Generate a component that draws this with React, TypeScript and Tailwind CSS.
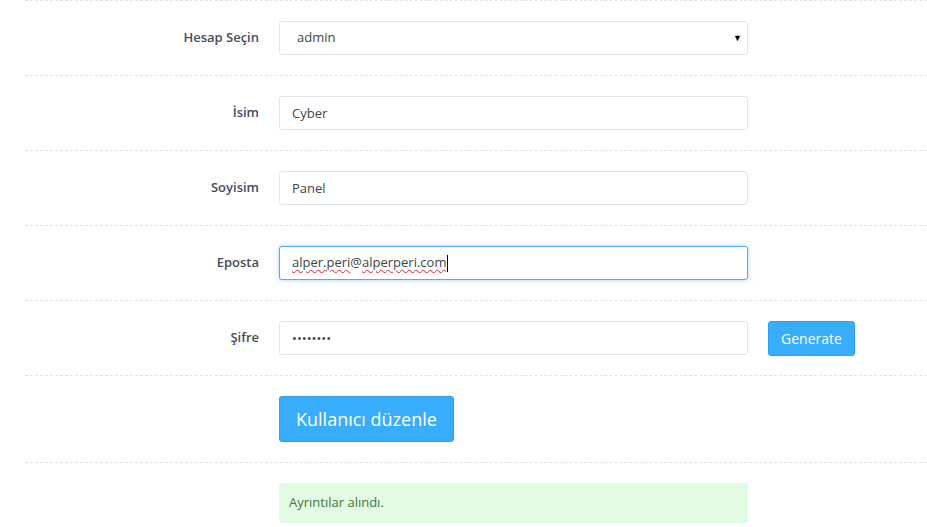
import { ReactNode } from "react";

const font = { fontFamily: '"Open Sans", "Noto Sans", sans-serif' };

function Row({ label, children }: { label?: string; children: ReactNode }) {
  return (
    <div className="flex items-center py-5 border-t border-dashed border-[#dde5ee]">
      <label className="w-[234px] shrink-0 text-right text-[13px] font-semibold text-[#474c59]">
        {label}
      </label>
      <div className="ml-5 flex items-center gap-5">{children}</div>
    </div>
  );
}

const inputCls =
  "w-[469px] h-[34px] rounded-[3px] border border-[#dde5ee] bg-white px-3 text-[13px] text-[#444] outline-none";

export default function App() {
  return (
    <div className="min-h-screen bg-white" style={font}>
      <form className="pl-[25px]" onSubmit={(e) => e.preventDefault()}>
        <Row label="Hesap Seçin">
          <div className="relative">
            <select
              defaultValue="admin"
              className={`${inputCls} appearance-none pl-[17px]`}
            >
              <option value="admin">admin</option>
              <option value="editor">editor</option>
            </select>
            <span className="pointer-events-none absolute right-[6px] top-[10px] text-[9px] text-black">
              ▼
            </span>
          </div>
        </Row>

        <Row label="İsim">
          <input className={inputCls} defaultValue="Cyber" />
        </Row>

        <Row label="Soyisim">
          <input className={inputCls} defaultValue="Panel" />
        </Row>

        <Row label="Eposta">
          {/* focused field with spell-check marks */}
          <div className="flex w-[469px] h-[34px] items-center rounded-[3px] border border-[#5aa8ef] bg-white px-3 text-[13px] text-[#444] shadow-[0_0_4px_rgba(90,168,239,0.55)]">
            <span className="underline decoration-wavy decoration-[#e02020] decoration-1 underline-offset-2">
              alper.peri
            </span>
            <span>@</span>
            <span className="underline decoration-wavy decoration-[#e02020] decoration-1 underline-offset-2">
              alperperi.com
            </span>
            <span className="ml-px h-[17px] w-px bg-black" />
          </div>
        </Row>

        <Row label="Şifre">
          <input type="password" className={inputCls} defaultValue="12345678" />
          <div className="h-[34px] flex items-center">
            <button
              type="button"
              className="h-[35px] rounded-[3px] border border-[#2c9fee] bg-[#38adfb] px-3 text-[14px] text-white"
            >
              Generate
            </button>
          </div>
        </Row>

        <Row>
          <button
            type="submit"
            className="h-[46px] rounded-[3px] border border-[#2c9fee] bg-[#38adfb] px-4 text-[18px] text-white"
          >
            Kullanıcı düzenle
          </button>
        </Row>

        <Row>
          <div className="w-[469px] h-[40px] flex items-center rounded-[3px] bg-[#e2fbe2] px-[10px] text-[13px] text-[#43763f]">
            Ayrıntılar alındı.
          </div>
        </Row>
      </form>
    </div>
  );
}
